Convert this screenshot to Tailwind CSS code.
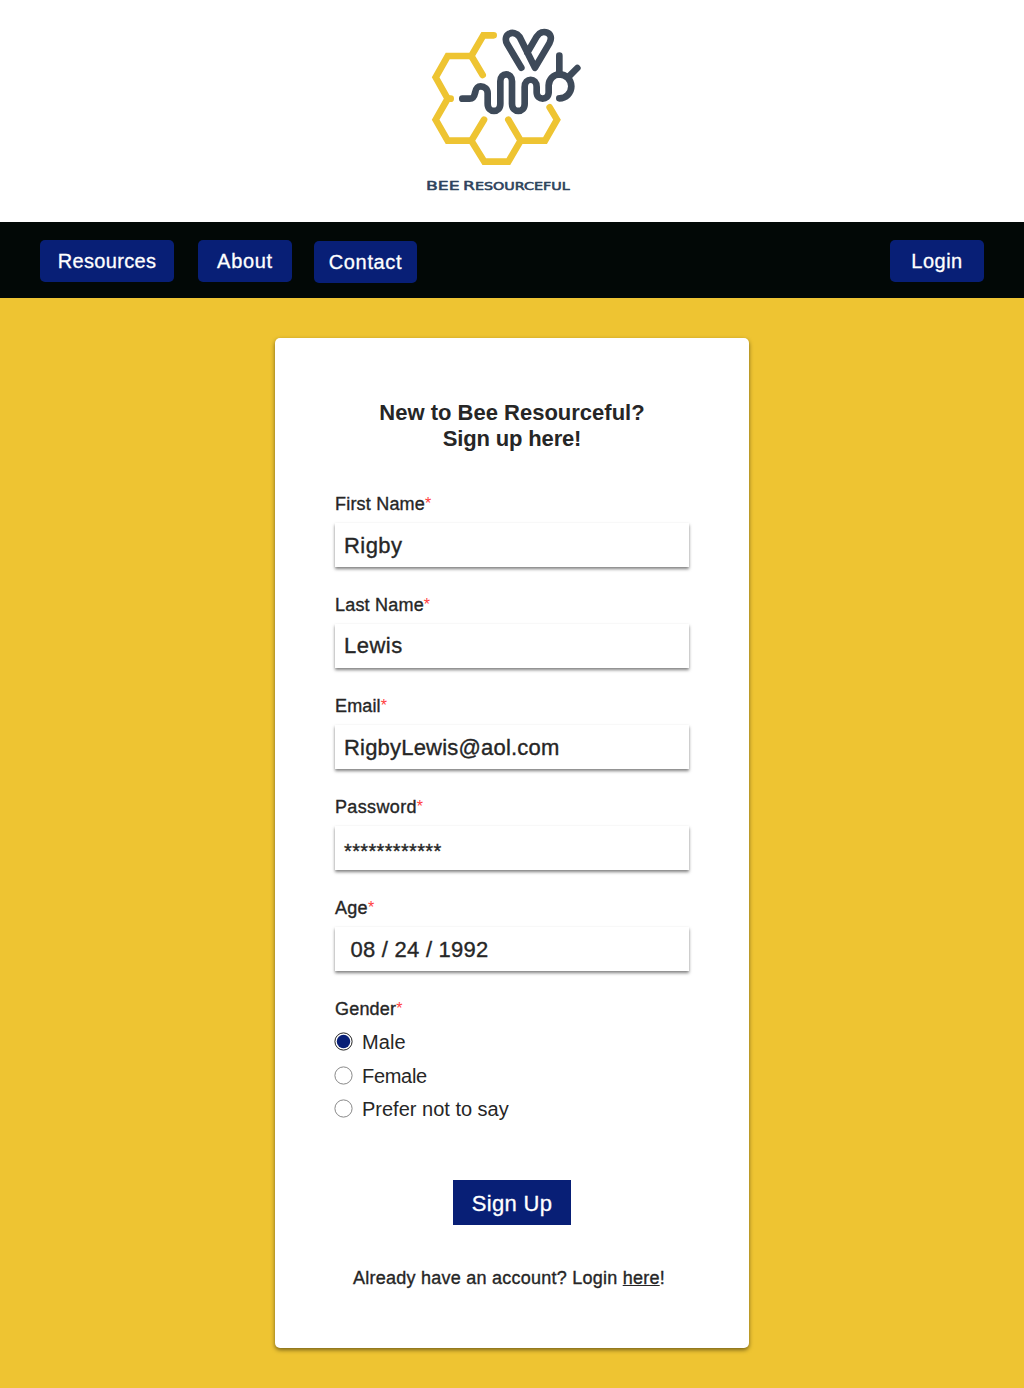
<!DOCTYPE html>
<html lang="en">
<head>
<meta charset="utf-8">
<title>BEE Resourceful - Sign up</title>
<script src="https://cdn.jsdelivr.net/npm/@tailwindcss/browser@4"></script>
</head>
<body class="min-h-[1388px] bg-[#eec432] font-['Liberation_Sans',Arial,sans-serif] text-[#262626]">
<header class="flex h-[222px] justify-center bg-white pt-5">
  <svg class="mr-[14px] h-[180px] w-[170px]" viewBox="0 0 510 540" fill="none" stroke-width="20" stroke-linecap="round" stroke-linejoin="round">
    <g stroke="#eec432" stroke-linejoin="miter">
      <path d="M221 46H190L154 108H83L47 172L83 236L47 299L83 362H154L192 299"/>
      <path d="M154 108L188 165M83 236H92M154 362L193 425H265L302 362H375L411 299L389 262M302 362L265 299"/>
    </g>
    <g stroke="#3e4a59">
      <path d="M304 143L262 73C245 43 281 26 299 51L345 143L388 70C406 37 365 24 350 50L322 98"/>
      <path d="M127 236H149C174 236 157 199 182 199C193 199 203 207 203 220V251C203 280 241 280 241 251V184C241 156 276 156 276 184V251C276 280 314 280 314 251V201C314 172 350 172 350 201V217C350 242 386 242 386 217V196A33 34 0 0 1 418 163A36 36 0 0 1 418 235"/>
      <path d="M418 107V161M472 144L444 172"/>
    </g>
    <g fill="#2d435c" stroke="#2d435c" stroke-width="1.6" font-family="DejaVu Sans, sans-serif">
      <text x="18" y="511" font-size="39" textLength="101" lengthAdjust="spacingAndGlyphs">BEE</text>
      <text x="129" y="511" font-size="39" textLength="36" lengthAdjust="spacingAndGlyphs">R</text>
      <text x="165" y="511" font-size="31" textLength="284" lengthAdjust="spacingAndGlyphs">ESOURCEFUL</text>
    </g>
  </svg>
</header>
<nav class="flex h-[76px] items-start bg-[#020806] px-10 pt-[18px] text-xl text-white [-webkit-text-stroke:0.3px_white]">
  <a class="flex h-[42px] w-[134px] items-center justify-center rounded-[5px] bg-[#081f76] tracking-[0.35px]">Resources</a>
  <a class="ml-6 flex h-[42px] w-[94px] items-center justify-center rounded-[5px] bg-[#081f76] tracking-[0.7px]">About</a>
  <a class="mt-px ml-[22px] flex h-[42px] w-[103px] items-center justify-center rounded-[5px] bg-[#081f76] tracking-[0.65px]">Contact</a>
  <a class="ml-auto flex h-[42px] w-[94px] items-center justify-center rounded-[5px] bg-[#081f76] tracking-[0.5px]">Login</a>
</nav>
<main class="mx-auto mt-10 h-[1010px] w-[474px] rounded-[5px] bg-white px-[60px] pt-[62px] shadow-[0_2px_4px_rgba(0,0,0,0.5)]">
  <h1 class="text-center text-[22px] leading-[26px] font-bold">New to Bee Resourceful?<br><span class="tracking-[-0.15px]">Sign up here!</span></h1>
  <form class="mt-10 [-webkit-text-stroke:0.35px_#262626]">
    <div class="flex flex-col gap-[26px]">
      <div>
        <div class="h-[31px] text-lg leading-6 tracking-[0.2px]">First Name<span class="inline-block align-[1px] text-base leading-none tracking-normal text-[#ff4040] [-webkit-text-stroke:0]">*</span></div>
        <div class="flex h-[44px] items-center bg-white px-[9px] text-[22px] tracking-[0.45px] shadow-[0_2px_3px_rgba(0,0,0,0.5)]">Rigby</div>
      </div>
      <div>
        <div class="h-[31px] text-lg leading-6 tracking-[0.2px]">Last Name<span class="inline-block align-[1px] text-base leading-none tracking-normal text-[#ff4040] [-webkit-text-stroke:0]">*</span></div>
        <div class="flex h-[44px] items-center bg-white px-[9px] pb-px text-[22px] tracking-[0.5px] shadow-[0_2px_3px_rgba(0,0,0,0.5)]">Lewis</div>
      </div>
      <div>
        <div class="h-[31px] text-lg leading-6 tracking-[0.15px]">Email<span class="inline-block align-[1px] text-base leading-none tracking-normal text-[#ff4040] [-webkit-text-stroke:0]">*</span></div>
        <div class="flex h-[44px] items-center bg-white px-[9px] text-[22px] tracking-[0.2px] shadow-[0_2px_3px_rgba(0,0,0,0.5)]">RigbyLewis@aol.com</div>
      </div>
      <div>
        <div class="h-[31px] text-lg leading-6 tracking-[0.35px]">Password<span class="inline-block align-[1px] text-base leading-none tracking-normal text-[#ff4040] [-webkit-text-stroke:0]">*</span></div>
        <div class="flex h-[44px] items-center bg-white px-[9px] pt-[6px] text-xl tracking-[0.35px] shadow-[0_2px_3px_rgba(0,0,0,0.5)]">************</div>
      </div>
      <div>
        <div class="h-[31px] text-lg leading-6 tracking-[0.3px]">Age<span class="inline-block align-[1px] text-base leading-none tracking-normal text-[#ff4040] [-webkit-text-stroke:0]">*</span></div>
        <div class="flex h-[44px] items-center bg-white px-[15.5px] pt-px text-[22px] tracking-[0.25px] shadow-[0_2px_3px_rgba(0,0,0,0.5)]">08 / 24 / 1992</div>
      </div>
    </div>
    <div class="mt-[26px] h-[31px] text-lg leading-6 tracking-[0.2px]">Gender<span class="inline-block align-[1px] text-base leading-none tracking-normal text-[#ff4040] [-webkit-text-stroke:0]">*</span></div>
    <div class="flex flex-col pt-[2px] text-xl leading-[33.5px] [-webkit-text-stroke:0]">
      <label class="flex h-[33.5px] gap-[9px]"><svg class="mt-[2px] -ml-px h-[19px] w-[19px]" viewBox="0 0 19 19"><circle cx="9.5" cy="9.5" r="8.6" fill="white" stroke="#222"/><circle cx="9.5" cy="9.5" r="6.7" fill="#081f76"/></svg><span class="-mt-1 tracking-[0.1px]">Male</span></label>
      <label class="flex h-[33.5px] gap-[9px]"><svg class="mt-[2px] -ml-px h-[19px] w-[19px]" viewBox="0 0 19 19"><circle cx="9.5" cy="9.5" r="8.6" fill="white" stroke="#888"/></svg><span class="-mt-1 tracking-[-0.3px]">Female</span></label>
      <label class="flex h-[33.5px] gap-[9px]"><svg class="mt-[2px] -ml-px h-[19px] w-[19px]" viewBox="0 0 19 19"><circle cx="9.5" cy="9.5" r="8.6" fill="white" stroke="#888"/></svg><span class="-mt-1">Prefer not to say</span></label>
    </div>
    <button type="button" class="mx-auto mt-[49px] flex h-[45px] w-[118px] items-center justify-center bg-[#081f76] pt-[2px] text-[22px] tracking-[0.3px] text-white [-webkit-text-stroke:0.3px_white]">Sign Up</button>
    <p class="mt-[41px] -ml-[6px] text-center text-lg leading-6 tracking-[0.24px] whitespace-nowrap">Already have an account? Login <a class="underline decoration-1 underline-offset-1">here</a>!</p>
  </form>
</main>
</body>
</html>
